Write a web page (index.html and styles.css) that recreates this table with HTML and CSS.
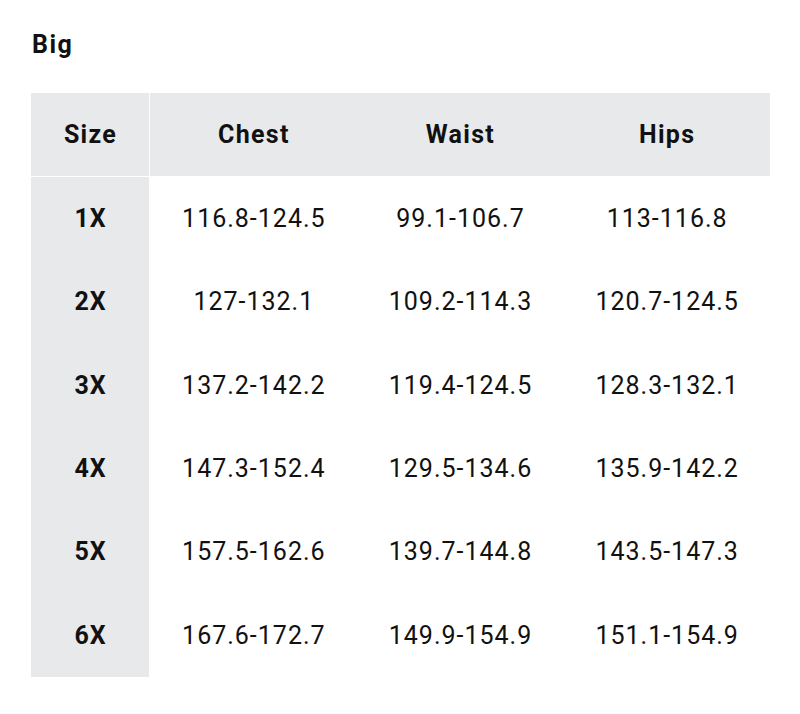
FILE: index.html
```html
<!DOCTYPE html>
<html>
<head>
<meta charset="utf-8">
<link rel="stylesheet" href="styles.css">
</head>
<body>
<div class="page">
  <h2 class="title">Big</h2>
  <table class="sizes">
    <thead>
      <tr><th class="first">Size</th><th>Chest</th><th>Waist</th><th>Hips</th></tr>
    </thead>
    <tbody>
      <tr><td class="first">1X</td><td>116.8-124.5</td><td>99.1-106.7</td><td>113-116.8</td></tr>
      <tr><td class="first">2X</td><td>127-132.1</td><td>109.2-114.3</td><td>120.7-124.5</td></tr>
      <tr><td class="first">3X</td><td>137.2-142.2</td><td>119.4-124.5</td><td>128.3-132.1</td></tr>
      <tr><td class="first">4X</td><td>147.3-152.4</td><td>129.5-134.6</td><td>135.9-142.2</td></tr>
      <tr><td class="first">5X</td><td>157.5-162.6</td><td>139.7-144.8</td><td>143.5-147.3</td></tr>
      <tr><td class="first">6X</td><td>167.6-172.7</td><td>149.9-154.9</td><td>151.1-154.9</td></tr>
    </tbody>
  </table>
</div>
</body>
</html>
```
FILE: styles.css
```css
html, body {
  margin: 0;
  padding: 0;
  background: #fff;
}
body {
  font-family: Roboto, "Liberation Sans", sans-serif;
  color: #111;
}
.page {
  padding: 30px 30px 0 31px;
}
.title {
  margin: 0 0 33px 1px;
  font-size: 25px;
  font-weight: 700;
  line-height: 30px;
  letter-spacing: 1.5px;
}
.sizes {
  width: 739px;
  border-collapse: separate;
  border-spacing: 0;
  table-layout: fixed;
  font-size: 25px;
  letter-spacing: 1px;
}
.sizes th, .sizes td {
  text-align: center;
  vertical-align: middle;
  padding: 0 0 0 1px;
}
.sizes th {
  background: #e8e9eb;
  font-weight: 700;
  height: 83px;
  border-bottom: 1px solid #fff;
  letter-spacing: 1.3px;
}
.sizes td {
  height: 83.33px;
  font-weight: 400;
}
.sizes .first {
  width: 117px;
  background: #e8e9eb;
  border-right: 1px solid #fff;
  font-weight: 700;
}
```
